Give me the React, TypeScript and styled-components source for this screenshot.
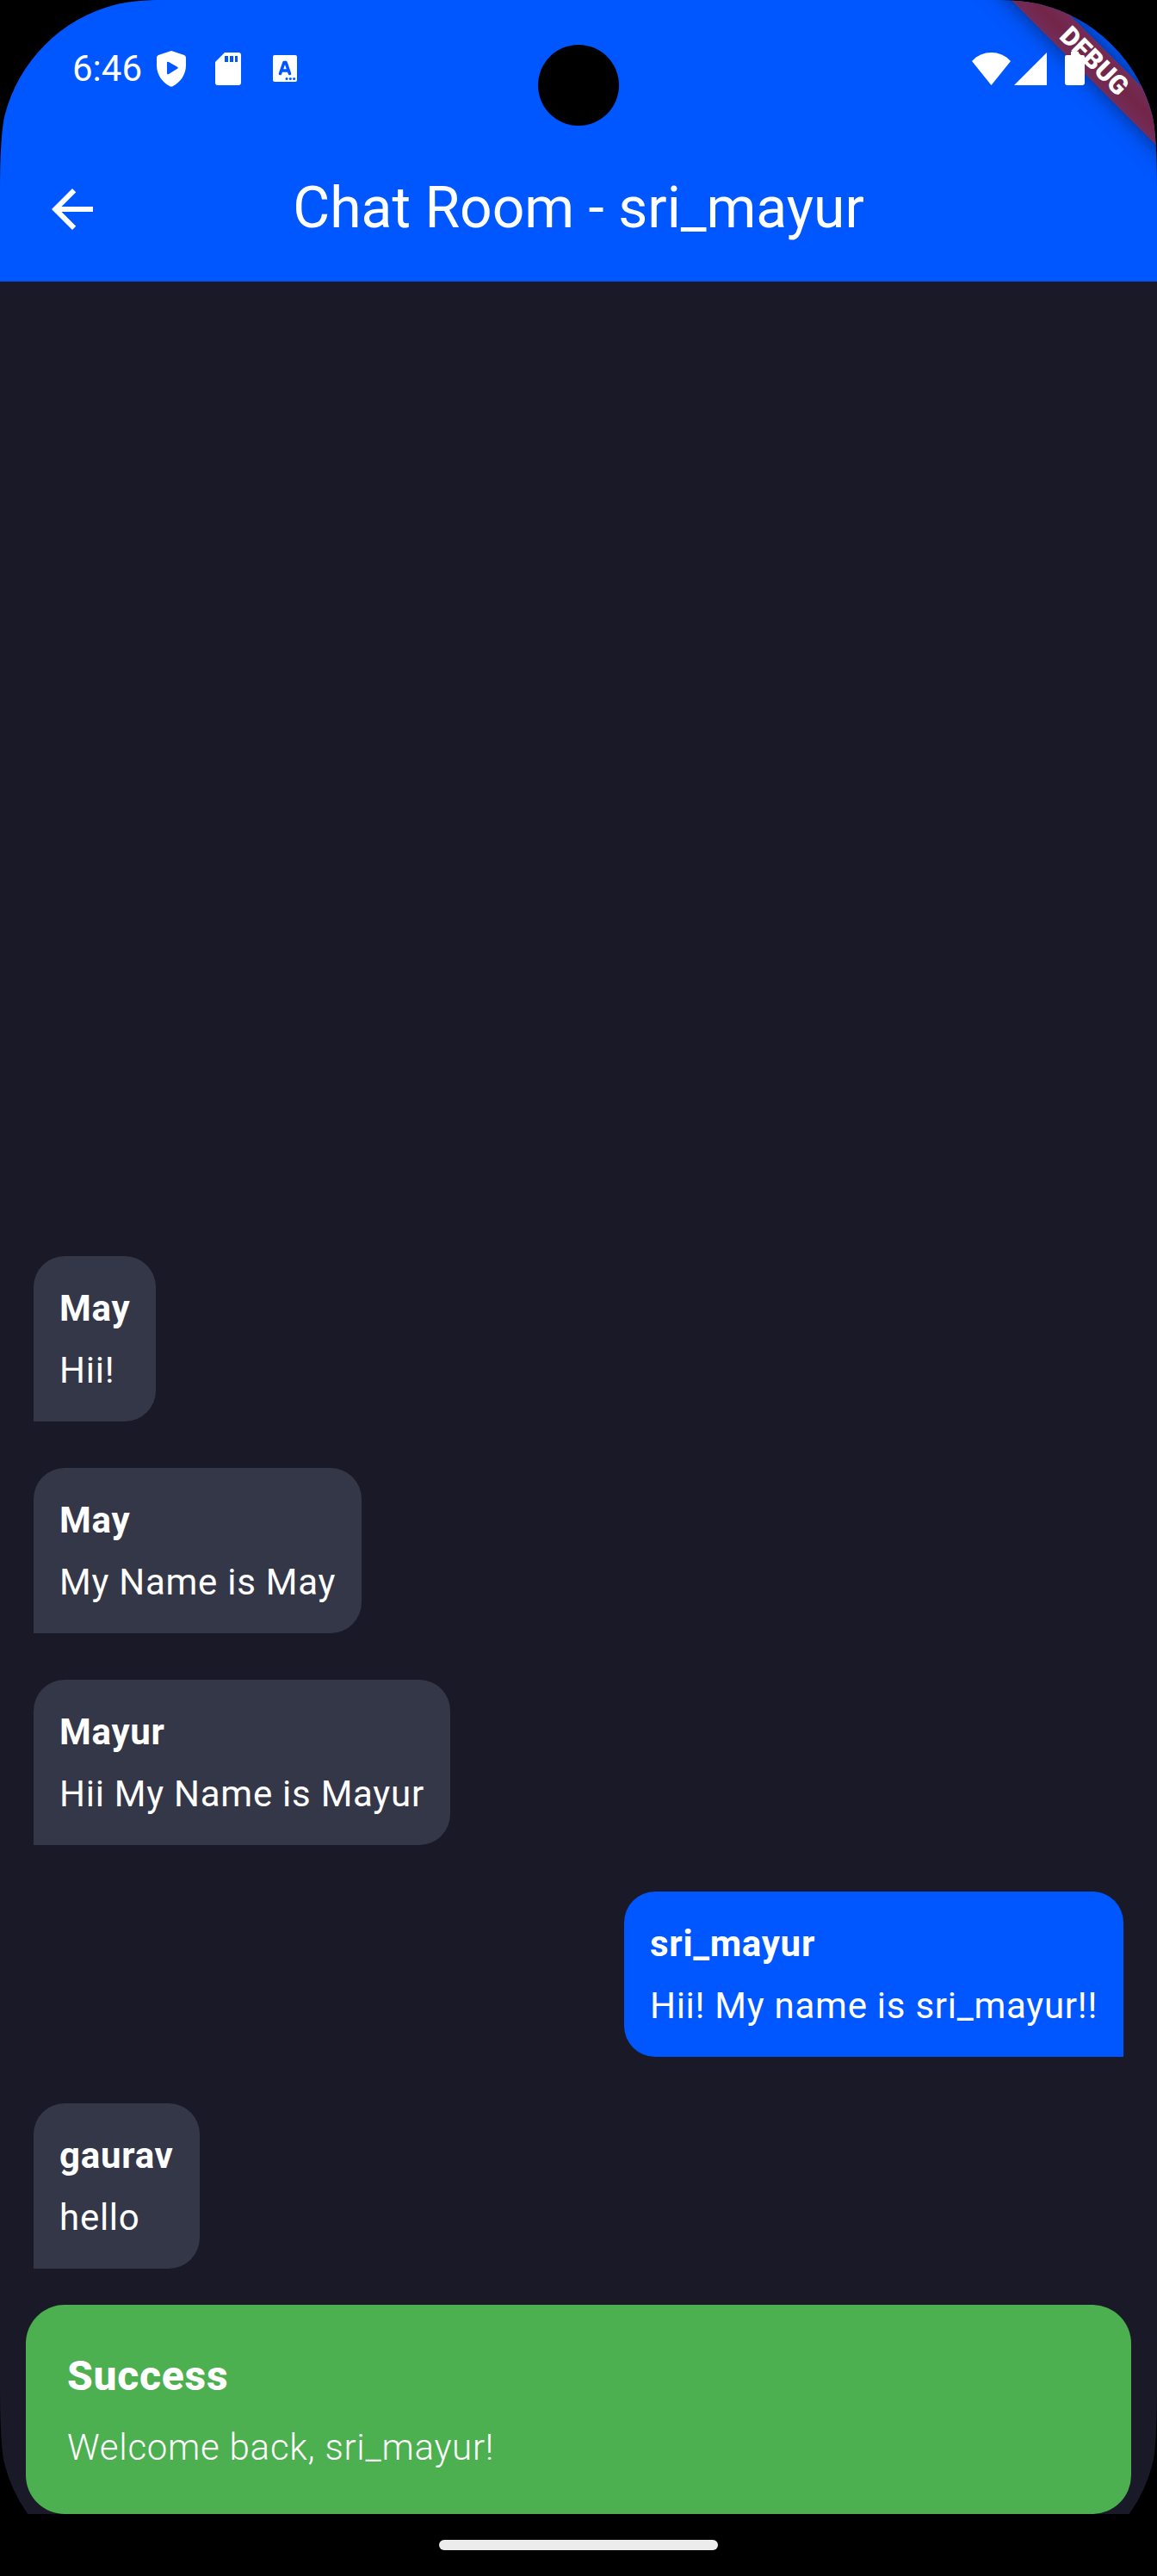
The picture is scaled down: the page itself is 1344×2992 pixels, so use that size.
import React from "react";
import styled, { createGlobalStyle } from "styled-components";

const Global = createGlobalStyle`
  body { margin: 0; background: #000; }
  * { box-sizing: border-box; }
`;

const Device = styled.div`
  position: relative;
  width: 1344px;
  height: 2992px;
  overflow: hidden;
  background: #000;
  color: #fff;
  font-family: Roboto, "Liberation Sans", sans-serif;
`;

const Screen = styled.div`
  position: relative;
  display: flex;
  flex-direction: column;
  height: 2920px;
  overflow: hidden;
  background: #1a1927;
  clip-path: path("M0 225 C0 185 1.500 149.500 5.800 133 A178 178 0 0 1 133 5.800 C149.500 1.500 170 0 190 0 H1154 C1174 0 1194.500 1.500 1211 5.800 A178 178 0 0 1 1338.200 133 C1342.500 149.500 1344 185 1344 225 V2770 C1344 2805 1342.800 2845 1339.200 2860 A172.500 172.500 0 0 1 1311.700 2920 H32.300 A172.500 172.500 0 0 1 4.800 2860 C1.200 2845 0 2805 0 2770 Z");
`;

const Header = styled.header`
  display: flex;
  flex-direction: column;
  height: 327px;
  flex: none;
  background: #0057ff;
`;

const StatusBar = styled.div`
  position: relative;
  z-index: 2;
  display: flex;
  align-items: center;
  justify-content: space-between;
  height: 159px;
  padding: 0 84px;
`;

const StatusGroup = styled.div`
  display: flex;
  align-items: center;
`;

const Clock = styled.span`
  width: 97px;
  font-size: 42px;
  line-height: 48px;
`;

const Glyph = styled.svg<{ $gap?: number }>`
  display: block;
  flex: none;
  margin-left: ${(p) => p.$gap ?? 0}px;
  fill: #fff;
`;

const TitleBar = styled.div`
  display: grid;
  grid-template-columns: 168px 1fr 168px;
  align-items: center;
  height: 168px;
`;

const BackButton = styled.button`
  display: flex;
  justify-content: center;
  padding: 0;
  border: 0;
  background: none;
`;

const Title = styled.h1`
  margin: 0;
  padding-bottom: 2px;
  font-size: 66px;
  font-weight: 400;
  line-height: 84px;
  text-align: center;
  white-space: nowrap;
`;

const Messages = styled.main`
  display: flex;
  flex: 1;
  flex-direction: column;
  justify-content: flex-end;
  gap: 54px;
  padding: 0 39px 42px;
`;

const Bubble = styled.div<{ $mine?: boolean }>`
  display: flex;
  flex-direction: column;
  gap: 12px;
  align-self: ${(p) => (p.$mine ? "flex-end" : "flex-start")};
  padding: 31px 30px 29px;
  border-radius: ${(p) => (p.$mine ? "36px 36px 0 36px" : "36px 36px 36px 0")};
  background: ${(p) => (p.$mine ? "#0057ff" : "#343748")};
  font-size: 42px;
  line-height: 60px;
  letter-spacing: 0.75px;
  white-space: nowrap;
`;

const Sender = styled.div`
  font-weight: 700;
`;

const Body = styled.div``;

const Snackbar = styled.div`
  display: flex;
  flex: none;
  flex-direction: column;
  gap: 18px;
  margin: 0 30px;
  padding: 48px;
  height: 243px;
  border-radius: 45px;
  background: #4caf50;
`;

const SnackTitle = styled.div`
  font-size: 48px;
  font-weight: 800;
  line-height: 69px;
  letter-spacing: 0.75px;
`;

const SnackText = styled.div`
  padding-top: 1px;
  font-size: 42px;
  font-weight: 300;
  line-height: 60px;
  letter-spacing: 0.75px;
`;

const NavBar = styled.footer`
  display: flex;
  align-items: center;
  justify-content: center;
  height: 72px;
`;

const NavHandle = styled.div`
  width: 324px;
  height: 12px;
  border-radius: 6px;
  background: #ececec;
`;

const Camera = styled.div`
  position: absolute;
  top: 52px;
  left: 625px;
  width: 94px;
  height: 94px;
  border-radius: 50%;
  background: #000;
`;

/* Diagonal debug banner across the top right corner, below the status icons. */
const Banner = styled.div`
  position: absolute;
  z-index: 1;
  top: 52.5px;
  left: 1021px;
  width: 500px;
  height: 36px;
  transform: rotate(45deg);
  background: linear-gradient(#732c58, #732548 50%, #732c58);
  box-shadow: 0 0 26px rgba(0, 0, 0, 0.5);
  font-size: 30.6px;
  font-weight: 900;
  line-height: 36px;
  text-align: center;
`;

const messages = [
  { sender: "May", text: "Hii!" },
  { sender: "May", text: "My Name is May" },
  { sender: "Mayur", text: "Hii My Name is Mayur" },
  { sender: "sri_mayur", text: "Hii! My name is sri_mayur!!", mine: true },
  { sender: "gaurav", text: "hello" },
];

export default function App() {
  return (
    <Device>
      <Global />
      <Screen>
        <Header>
          <StatusBar>
            <StatusGroup>
              <Clock>6:46</Clock>
              <Glyph width="36" height="42" viewBox="0 0 36 42">
                <path fillRule="evenodd" d="M16.500 0.500 Q18 -0.300 19.500 0.500 L33 5 Q35 6 35 8 V17 C35 28 28 37 20 41 Q18 42 16 41 C8 37 1 28 1 17 V8 Q1 6 3 5Z M13 14 Q13 12 15 13 L25 18.700 Q26.500 19.800 25 20.800 L15 27 Q13 28 13 26Z" />
              </Glyph>
              <Glyph $gap={33} width="30" height="38" viewBox="0 0 30 38">
                <path fillRule="evenodd" d="M11 0 H27 Q30 0 30 3 V35 Q30 38 27 38 H3 Q0 38 0 35 V11Z M11 4 V11 H15 V4Z M17 4 V11 H21 V4Z M23 4 V11 H26 V4Z" />
              </Glyph>
              <Glyph $gap={37} width="28" height="31" viewBox="0 0 28 31">
                <rect width="28" height="31" rx="2" />
                <path d="M8.500 21.500 L13 8.500 H15 L19.500 21.500 M10.500 18 H17.500" fill="none" stroke="#0057ff" strokeWidth="3.600" strokeLinecap="round" strokeLinejoin="round" />
                <g fill="#0057ff"><circle cx="16" cy="27.500" r="1.500" /><circle cx="20.300" cy="27.500" r="1.500" /><circle cx="24.600" cy="27.500" r="1.500" /></g>
              </Glyph>
            </StatusGroup>
            <StatusGroup>
              <Glyph width="45" height="38" viewBox="0 0 45 38">
                <path d="M0 10 C12 -3.300 33 -3.300 45 10 L22.500 38Z" />
              </Glyph>
              <Glyph $gap={4} width="38" height="38" viewBox="0 0 38 38"><path d="M38 0 V38 H0Z" /></Glyph>
              <Glyph $gap={21} width="23" height="39" viewBox="0 0 23 39">
                <path d="M7 0 H16 V4 H21 Q23 4 23 6 V36 Q23 39 20 39 H3 Q0 39 0 36 V6 Q0 4 2 4 H7Z" />
              </Glyph>
            </StatusGroup>
          </StatusBar>
          <TitleBar>
            <BackButton aria-label="Back">
              <Glyph width="48" height="48" viewBox="4 4 16 16"><path d="M20 11H7.830l5.590-5.590L12 4l-8 8 8 8 1.410-1.410L7.830 13H20v-2z" /></Glyph>
            </BackButton>
            <Title>Chat Room - sri_mayur</Title>
          </TitleBar>
        </Header>
        <Messages>
          {messages.map((m, i) => (
            <Bubble key={i} $mine={m.mine}>
              <Sender>{m.sender}</Sender>
              <Body>{m.text}</Body>
            </Bubble>
          ))}
        </Messages>
        <Snackbar>
          <SnackTitle>Success</SnackTitle>
          <SnackText>Welcome back, sri_mayur!</SnackText>
        </Snackbar>
        <Banner>DEBUG</Banner>
      </Screen>
      <NavBar><NavHandle /></NavBar>
      <Camera />
    </Device>
  );
}
